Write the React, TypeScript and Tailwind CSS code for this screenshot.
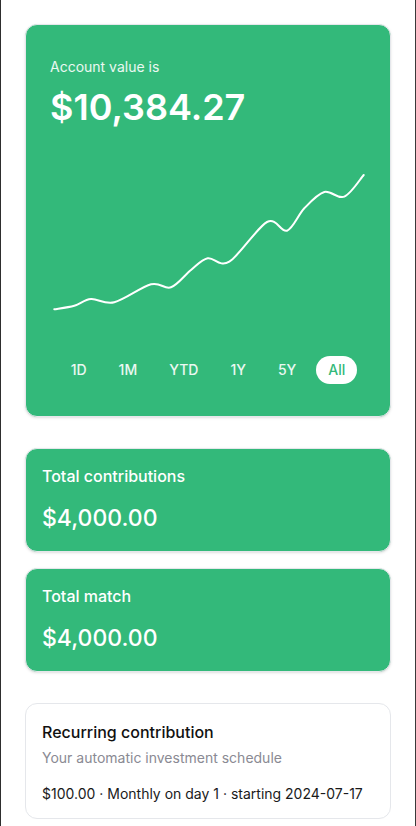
import { useState } from "react";

const periods = ["1D", "1M", "YTD", "1Y", "5Y", "All"];

// chart points, svg coords (318 x 197)
const points: [number, number][] = [
  [4.3, 166.3],
  [24.3, 162.7],
  [41, 156],
  [64.3, 159.3],
  [101, 141.3],
  [121, 144.3],
  [141, 127],
  [157.7, 115.3],
  [179.3, 118.7],
  [217, 79],
  [237, 87.7],
  [254.3, 65.3],
  [274.3, 49],
  [294.3, 53.7],
  [313.7, 32],
];

function smoothPath(pts: [number, number][]) {
  let d = `M${pts[0][0]},${pts[0][1]}`;
  for (let i = 0; i < pts.length - 1; i++) {
    const p0 = pts[i - 1] || pts[i];
    const p1 = pts[i];
    const p2 = pts[i + 1];
    const p3 = pts[i + 2] || p2;
    const c1x = p1[0] + (p2[0] - p0[0]) / 6;
    const c1y = p1[1] + (p2[1] - p0[1]) / 6;
    const c2x = p2[0] - (p3[0] - p1[0]) / 6;
    const c2y = p2[1] - (p3[1] - p1[1]) / 6;
    d += ` C${c1x.toFixed(1)},${c1y.toFixed(1)} ${c2x.toFixed(1)},${c2y.toFixed(1)} ${p2[0]},${p2[1]}`;
  }
  return d;
}

function StatCard({ label, value }: { label: string; value: string }) {
  return (
    <div className="rounded-xl border border-gray-200 bg-[#33b97a] px-4 pt-[15px] pb-[17px] shadow-sm text-white">
      <div className="text-base font-medium leading-6">{label}</div>
      <div className="mt-3.5 text-[23px] font-medium leading-8">{value}</div>
    </div>
  );
}

export default function App() {
  const [period, setPeriod] = useState("All");

  return (
    <div
      className="min-h-[826px] w-[416px] bg-white border-x border-l-[#2e2e2e] border-r-[#3a3a3a]"
      style={{ fontFamily: "Inter, 'Noto Sans', sans-serif" }}
    >
      <div className="flex flex-col px-6 pt-6">
        {/* Account value */}
        <div className="rounded-xl border border-gray-200 bg-[#33b97a] px-6 pt-8 pb-8 shadow-sm text-white">
          <div className="text-sm leading-5 text-white/90">Account value is</div>
          <div className="mt-2.5 text-4xl font-semibold leading-10">$10,384.27</div>

          <svg viewBox="0 0 318 197" className="mt-4 block h-[197px] w-[318px]" fill="none">
            <path d={smoothPath(points)} stroke="white" strokeWidth={2} strokeLinecap="round" strokeLinejoin="round" />
          </svg>

          <div className="mt-4 flex items-center justify-center gap-2">
            {periods.map((p) => (
              <button
                key={p}
                onClick={() => setPeriod(p)}
                className={
                  p === period
                    ? "rounded-full bg-white px-3 py-1 text-sm font-medium leading-5 text-[#33b97a]"
                    : "rounded-full px-3 py-1 text-sm font-medium leading-5 text-white/90"
                }
              >
                {p}
              </button>
            ))}
          </div>
        </div>

        <div className="mt-[31px] flex flex-col gap-4">
          <StatCard label="Total contributions" value="$4,000.00" />
          <StatCard label="Total match" value="$4,000.00" />
        </div>

        {/* Recurring */}
        <div className="mt-[31px] rounded-xl border border-gray-200 bg-white px-4 pt-4 pb-[14px]">
          <div className="text-base font-medium leading-6 text-[#111]">Recurring contribution</div>
          <div className="mt-1 text-sm leading-5 text-[#8a8a93]">Your automatic investment schedule</div>
          <div className="mt-4 text-sm leading-5 text-[#1a1a1a]">
            $100.00 · Monthly on day 1 · starting 2024-07-17
          </div>
        </div>
      </div>
    </div>
  );
}
